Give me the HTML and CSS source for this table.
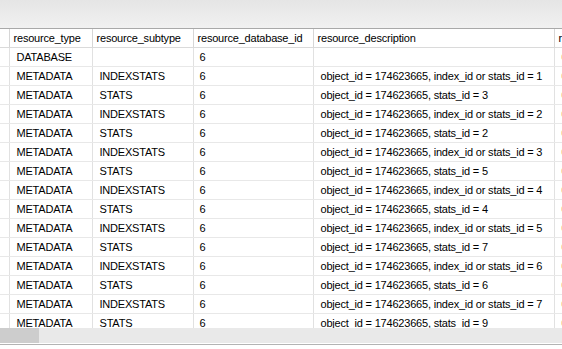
FILE: index.html
```html
<!DOCTYPE html>
<html lang="en">
  <head>
    <meta charset="UTF-8" />
    <title>Results</title>
    <link rel="stylesheet" href="styles.css">
  </head>
  <body>
    <div class="toolbar"></div>

    <div class="grid-wrap">
      <table class="grid">
        <colgroup>
          <col class="c-sel" />
          <col class="c-type" />
          <col class="c-sub" />
          <col class="c-db" />
          <col class="c-desc" />
          <col class="c-next" />
        </colgroup>
        <thead>
          <tr>
            <th></th>
            <th>resource_type</th>
            <th>resource_subtype</th>
            <th>resource_database_id</th>
            <th>resource_description</th>
            <th>resource_associated_entity_id</th>
          </tr>
        </thead>
        <tbody>
          <tr><td></td><td>DATABASE</td><td></td><td>6</td><td></td><td>0</td></tr>
          <tr><td></td><td>METADATA</td><td>INDEXSTATS</td><td>6</td><td>object_id = 174623665, index_id or stats_id = 1</td><td>0</td></tr>
          <tr><td></td><td>METADATA</td><td>STATS</td><td>6</td><td>object_id = 174623665, stats_id = 3</td><td>0</td></tr>
          <tr><td></td><td>METADATA</td><td>INDEXSTATS</td><td>6</td><td>object_id = 174623665, index_id or stats_id = 2</td><td>0</td></tr>
          <tr><td></td><td>METADATA</td><td>STATS</td><td>6</td><td>object_id = 174623665, stats_id = 2</td><td>0</td></tr>
          <tr><td></td><td>METADATA</td><td>INDEXSTATS</td><td>6</td><td>object_id = 174623665, index_id or stats_id = 3</td><td>0</td></tr>
          <tr><td></td><td>METADATA</td><td>STATS</td><td>6</td><td>object_id = 174623665, stats_id = 5</td><td>0</td></tr>
          <tr><td></td><td>METADATA</td><td>INDEXSTATS</td><td>6</td><td>object_id = 174623665, index_id or stats_id = 4</td><td>0</td></tr>
          <tr><td></td><td>METADATA</td><td>STATS</td><td>6</td><td>object_id = 174623665, stats_id = 4</td><td>0</td></tr>
          <tr><td></td><td>METADATA</td><td>INDEXSTATS</td><td>6</td><td>object_id = 174623665, index_id or stats_id = 5</td><td>0</td></tr>
          <tr><td></td><td>METADATA</td><td>STATS</td><td>6</td><td>object_id = 174623665, stats_id = 7</td><td>0</td></tr>
          <tr><td></td><td>METADATA</td><td>INDEXSTATS</td><td>6</td><td>object_id = 174623665, index_id or stats_id = 6</td><td>0</td></tr>
          <tr><td></td><td>METADATA</td><td>STATS</td><td>6</td><td>object_id = 174623665, stats_id = 6</td><td>0</td></tr>
          <tr><td></td><td>METADATA</td><td>INDEXSTATS</td><td>6</td><td>object_id = 174623665, index_id or stats_id = 7</td><td>0</td></tr>
          <tr><td></td><td>METADATA</td><td>STATS</td><td>6</td><td>object_id = 174623665, stats_id = 9</td><td>0</td></tr>
        </tbody>
      </table>
    </div>

    <div class="hscroll">
      <div class="hscroll-thumb"></div>
    </div>
    <div class="status-line"></div>
  </body>
</html>
```

FILE: styles.css
```css
body {
  margin: 0;
  width: 562px;
  height: 349px;
  overflow: hidden;
  background: #ffffff;
  font-family: "Liberation Sans", Arial, sans-serif;
  font-size: 11px;
  letter-spacing: -0.2px;
  color: #000000;
}
.toolbar {
  height: 28px;
  background: linear-gradient(#e5e5e5, #f1f1f1);
  border-bottom: 1px solid #a9a9a9;
}
.grid-wrap {
  height: 299px;
  overflow: hidden;
}
.grid {
  border-collapse: collapse;
  table-layout: fixed;
  width: 700px;
}
.c-sel { width: 9px; }
.c-type { width: 83px; }
.c-sub { width: 101px; }
.c-db { width: 120px; }
.c-desc { width: 241px; }
.c-next { width: 146px; }
.grid th,
.grid td {
  height: 18px;
  padding: 0 0 0 7px;
  border-right: 1px solid #e1e1e1;
  border-bottom: 1px solid #e8e8e8;
  white-space: nowrap;
  overflow: hidden;
  text-align: left;
  font-weight: normal;
  line-height: 18px;
}
.grid th {
  padding-left: 4px;
  border-right-color: #d6d6d6;
  border-bottom-color: #dadada;
}
.grid th:first-child,
.grid td:first-child {
  padding: 0;
}
.grid td:nth-child(4) {
  padding-left: 6px;
}
.hscroll {
  height: 15px;
  background: #e9e9e9;
}
.hscroll-thumb {
  width: 39px;
  height: 15px;
  background: #cdcdcd;
}
.status-line {
  margin-top: 1px;
  height: 1px;
  background: #b3b3b3;
}
```
